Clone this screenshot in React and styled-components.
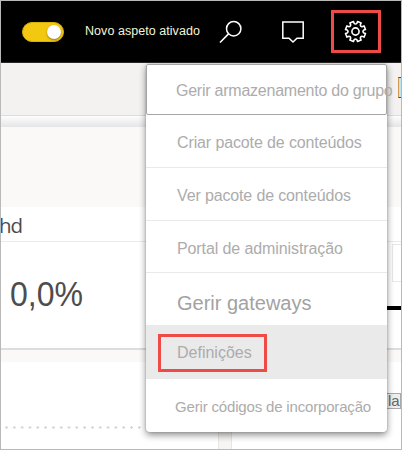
import React from "react";
import styled, { createGlobalStyle } from "styled-components";

const GlobalStyle = createGlobalStyle`
  * { box-sizing: border-box; }
  body { margin: 0; font-family: "Liberation Sans", Arial, sans-serif; }
`;

const Frame = styled.main`
  position: relative;
  display: flex;
  flex-direction: column;
  width: 402px;
  height: 450px;
  overflow: hidden;
  border: 1px solid #b9b9b9;
  background: #fff;
`;

const Header = styled.header`
  display: flex;
  flex: none;
  align-items: center;
  height: 62px;
  padding-left: 21px;
  background: #000;
  border-bottom: 1px solid #2b2829;
`;

const Toggle = styled.div`
  display: flex;
  justify-content: flex-end;
  align-items: center;
  width: 42px;
  height: 20px;
  padding-right: 2px;
  border-radius: 10px;
  border: 1px solid #d9b10e;
  background: #f2c811;
`;

const Knob = styled.span`
  width: 14px;
  height: 14px;
  border-radius: 50%;
  background: #fff;
  box-shadow: 0 1px 2px rgba(0, 0, 0, 0.4);
`;

const ToggleLabel = styled.span`
  width: 134px;
  padding-left: 21px;
  color: #f4f4d6;
  font-size: 12.5px;
  letter-spacing: 0.05px;
  line-height: 16px;
  margin-top: -2px;
  white-space: nowrap;
`;

const HeaderIcon = styled.span`
  display: flex;
  align-items: center;
  justify-content: center;
  width: ${(p) => p.$width}px;
  height: 42px;
`;

const SettingsButton = styled.button`
  display: flex;
  align-items: center;
  justify-content: center;
  width: 50px;
  height: 43px;
  margin-left: 9px;
  padding: 0 2px 0 0;
  border: 3px solid #ee4b46;
  background: transparent;
`;

const CommandBar = styled.div`
  display: flex;
  flex: none;
  justify-content: flex-end;
  align-items: flex-start;
  height: 53px;
  padding-top: 14px;
  background: #f3f2f1;
  border-bottom: 1px solid #dedddc;
`;

const EdgeButton = styled.span`
  width: 3px;
  height: 21px;
  border: 1px solid #3d5063;
  border-left-color: #d19a52;
  border-right: 0;
  background: #b9e5f5;
`;

const BarShadow = styled.div`
  flex: none;
  height: 11px;
  background: linear-gradient(#fdfdfd, #e5e5e5);
`;

const Band = styled.div`
  flex: none;
  height: ${(p) => p.$height}px;
  background: #faf9f8;
`;

const TileTitle = styled.div`
  flex: none;
  height: 35px;
  padding: 6px 0 0 0;
  color: #4b4b4b;
  font-size: 20.5px;
  letter-spacing: -1px;
  line-height: 25px;
  font-family: "Open Sans", sans-serif;
  border-bottom: 1px solid #ebebeb;

  span { display: block; margin-left: -2px; }
`;

const TileBody = styled.div`
  display: flex;
  flex: none;
  justify-content: space-between;
  height: 108px;
  border-bottom: 2px solid #dddddd;
`;

const Metric = styled.div`
  padding: 32px 0 0 9px;
  color: #4d4d4d;
  font-size: 35px;
  line-height: 40px;
  white-space: nowrap;

  span {
    display: block;
    transform: scaleX(0.915);
    transform-origin: left;
  }
`;

const SideTile = styled.div`
  width: 16px;
  padding-top: 2px;
`;

const SideBox = styled.div`
  height: 38px;
  margin-left: 7px;
  border: 1px solid #e8e8e8;
  border-right: 0;
`;

const SideRule = styled.div`
  height: 4px;
  margin-top: 24px;
  background: #000;
`;

const LowerTiles = styled.div`
  display: flex;
  flex: 1;
  background: #fff;
`;

const ChartTile = styled.div`
  width: 217px;
  padding: 64px 0 0 4px;
`;

const DotLine = styled.div`
  width: 137px;
  height: 3px;
  background: radial-gradient(circle at 1.5px 1.5px, #d2d2d2 0.9px, transparent 1.5px) 0 0 / 7.82px 3px repeat-x;
`;

const Gutter = styled.div`
  width: 14px;
  background: #f7f5f3;
  border: solid #e7e6e5;
  border-width: 0 1px;
`;

const ClippedLabel = styled.div`
  flex: 1;
  display: flex;
  justify-content: flex-end;
  padding-top: 31px;

  span {
    width: 14px;
    height: 16px;
    border: 1px solid #a9a9a9;
    border-width: 1px 1px 1px 0;
    background: #eee;
    color: #666;
    font-size: 15px;
    line-height: 14px;
    padding-left: 1px;
  }
`;

const Menu = styled.nav`
  position: absolute;
  top: 63px;
  left: 145px;
  width: 241px;
  height: 368px;
  display: flex;
  flex-direction: column;
  border-radius: 2px 2px 4px 4px;
  background: #fff;
  box-shadow: 0 3px 7px rgba(0, 0, 0, 0.45), 0 0 2px rgba(0, 0, 0, 0.2);
`;

const MenuItem = styled.div`
  display: flex;
  align-items: center;
  flex: none;
  height: ${(p) => p.$height || 53}px;
  padding: ${(p) => p.$top || 0}px 0 0 ${(p) => p.$left || 31}px;
  color: ${(p) => p.$color || "#acacac"};
  font-size: ${(p) => p.$size || 16}px;
  letter-spacing: ${(p) => p.$spacing || 0}px;
  white-space: nowrap;
  border-bottom: 1px solid ${(p) => p.$line || "#e9e9e9"};
`;

const FocusedItem = styled(MenuItem)`
  padding-left: 29px;
  border: 1px solid #a6a6a6;
  border-radius: 2px;
`;

const SelectedItem = styled(MenuItem)`
  padding: 0 0 0 12px;
  background: #eaeaea;
`;

const Highlight = styled.span`
  display: flex;
  align-items: center;
  width: 109px;
  height: 38px;
  margin-top: 2px;
  padding-left: 16px;
  border: 3px solid #ee4b46;
`;

const gearPath = Array.from({ length: 8 }, (_, i) => {
  const at = (deg, r) => {
    const a = ((i * 45 + 22.5 + deg) * Math.PI) / 180;
    return `${(11.5 + r * Math.sin(a)).toFixed(2)} ${(11.5 - r * Math.cos(a)).toFixed(2)}`;
  };
  return `${i ? "L" : "M"}${at(-11, 10.2)} L${at(11, 10.2)} L${at(13, 8.4)} Q${at(22.5, 6.6)} ${at(32, 8.4)}`;
}).join(" ") + "Z";

const SearchIcon = () => (
  <svg width="24" height="24" viewBox="0 0 24 24" fill="none" stroke="#fff" strokeWidth="1.5">
    <circle cx="14.7" cy="8.7" r="7.2" />
    <path d="M9.5 13.9L1 22.5" />
  </svg>
);

const CommentIcon = () => (
  <svg width="24" height="24" viewBox="0 0 24 24" fill="none" stroke="#fff" strokeWidth="1.5">
    <path d="M1.8 2H22.2V18.3H16L12 22L8 18.3H1.8Z" />
  </svg>
);

const GearIcon = () => (
  <svg width="23" height="23" viewBox="0 0 23 23" fill="none" stroke="#fff" strokeWidth="1.6" strokeLinejoin="round">
    <path d={gearPath} />
    <circle cx="11.5" cy="11.5" r="3.6" />
  </svg>
);

export default function App() {
  return (
    <>
      <GlobalStyle />
      <Frame>
        <Header>
          <Toggle role="switch" aria-checked="true"><Knob /></Toggle>
          <ToggleLabel>Novo aspeto ativado</ToggleLabel>
          <HeaderIcon $width={65}><SearchIcon /></HeaderIcon>
          <HeaderIcon $width={59}><CommentIcon /></HeaderIcon>
          <SettingsButton><GearIcon /></SettingsButton>
        </Header>
        <CommandBar><EdgeButton /></CommandBar>
        <BarShadow />
        <Band $height={80} />
        <TileTitle><span>hd</span></TileTitle>
        <TileBody>
          <Metric><span>0,0%</span></Metric>
          <SideTile>
            <SideBox />
            <SideRule />
          </SideTile>
        </TileBody>
        <Band $height={12} />
        <LowerTiles>
          <ChartTile><DotLine /></ChartTile>
          <Gutter />
          <ClippedLabel><span>la</span></ClippedLabel>
        </LowerTiles>
        <Menu>
          <FocusedItem $height={51} $top={3} $spacing={-0.24} $line="#a6a6a6">Gerir armazenamento do grupo</FocusedItem>
          <MenuItem $top={4} $spacing={-0.12}>Criar pacote de conteúdos</MenuItem>
          <MenuItem $top={4} $spacing={-0.14}>Ver pacote de conteúdos</MenuItem>
          <MenuItem $height={52} $top={4} $spacing={-0.1}>Portal de administração</MenuItem>
          <MenuItem $top={9} $size={20} $color="#a2a2a2" $line="#eaeaea">Gerir gateways</MenuItem>
          <SelectedItem><Highlight>Definições</Highlight></SelectedItem>
          <MenuItem $height={53} $top={2} $left={29} $size={15} $spacing={-0.17} $line="transparent">Gerir códigos de incorporação</MenuItem>
        </Menu>
      </Frame>
    </>
  );
}
